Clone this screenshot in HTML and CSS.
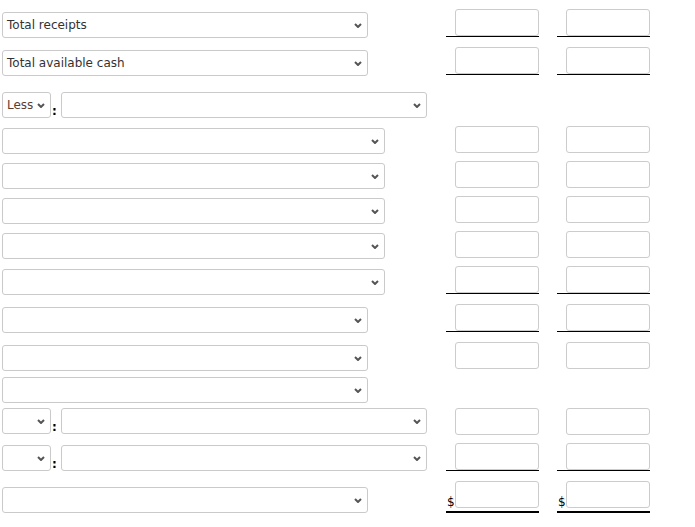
FILE: index.html
```html
<!DOCTYPE html>
<html lang="en">
<head>
<meta charset="utf-8">
<title>Cash budget</title>
<link rel="stylesheet" href="styles.css">
</head>
<body>
<div class="sheet">

  <div class="row row--tall">
    <div class="label pad-3"><div class="select w-366"><span>Total receipts</span><svg class="chev" width="8" height="5" viewBox="0 0 8 5"><polyline points="1,1 4,4 7,1"/></svg></div></div>
    <div class="amt ul"><input type="text"></div>
    <div class="amt ul"><input type="text"></div>
  </div>

  <div class="row row--open">
    <div class="label pad-3"><div class="select w-366"><span>Total available cash</span><svg class="chev" width="8" height="5" viewBox="0 0 8 5"><polyline points="1,1 4,4 7,1"/></svg></div></div>
    <div class="amt ul"><input type="text"></div>
    <div class="amt ul"><input type="text"></div>
  </div>

  <div class="row row--short">
    <div class="label pad-0">
      <div class="select w-49"><span class="less">Less</span><svg class="chev" width="8" height="5" viewBox="0 0 8 5"><polyline points="1,1 4,4 7,1"/></svg></div>
      <span class="colon">:</span>
      <div class="select w-366"><span></span><svg class="chev" width="8" height="5" viewBox="0 0 8 5"><polyline points="1,1 4,4 7,1"/></svg></div>
    </div>
  </div>

  <div class="row">
    <div class="label pad-2"><div class="select w-383"><span></span><svg class="chev" width="8" height="5" viewBox="0 0 8 5"><polyline points="1,1 4,4 7,1"/></svg></div></div>
    <div class="amt"><input type="text"></div>
    <div class="amt"><input type="text"></div>
  </div>

  <div class="row">
    <div class="label pad-2"><div class="select w-383"><span></span><svg class="chev" width="8" height="5" viewBox="0 0 8 5"><polyline points="1,1 4,4 7,1"/></svg></div></div>
    <div class="amt"><input type="text"></div>
    <div class="amt"><input type="text"></div>
  </div>

  <div class="row">
    <div class="label pad-2"><div class="select w-383"><span></span><svg class="chev" width="8" height="5" viewBox="0 0 8 5"><polyline points="1,1 4,4 7,1"/></svg></div></div>
    <div class="amt"><input type="text"></div>
    <div class="amt"><input type="text"></div>
  </div>

  <div class="row">
    <div class="label pad-2"><div class="select w-383"><span></span><svg class="chev" width="8" height="5" viewBox="0 0 8 5"><polyline points="1,1 4,4 7,1"/></svg></div></div>
    <div class="amt"><input type="text"></div>
    <div class="amt"><input type="text"></div>
  </div>

  <div class="row row--tall">
    <div class="label pad-3"><div class="select w-383"><span></span><svg class="chev" width="8" height="5" viewBox="0 0 8 5"><polyline points="1,1 4,4 7,1"/></svg></div></div>
    <div class="amt ul"><input type="text"></div>
    <div class="amt ul"><input type="text"></div>
  </div>

  <div class="row row--tall">
    <div class="label pad-3"><div class="select w-366"><span></span><svg class="chev" width="8" height="5" viewBox="0 0 8 5"><polyline points="1,1 4,4 7,1"/></svg></div></div>
    <div class="amt ul"><input type="text"></div>
    <div class="amt ul"><input type="text"></div>
  </div>

  <div class="row">
    <div class="label pad-3"><div class="select w-366"><span></span><svg class="chev" width="8" height="5" viewBox="0 0 8 5"><polyline points="1,1 4,4 7,1"/></svg></div></div>
    <div class="amt"><input type="text"></div>
    <div class="amt"><input type="text"></div>
  </div>

  <div class="row row--tight">
    <div class="label pad-0"><div class="select w-366"><span></span><svg class="chev" width="8" height="5" viewBox="0 0 8 5"><polyline points="1,1 4,4 7,1"/></svg></div></div>
  </div>

  <div class="row">
    <div class="label pad-0">
      <div class="select w-49"><span></span><svg class="chev" width="8" height="5" viewBox="0 0 8 5"><polyline points="1,1 4,4 7,1"/></svg></div>
      <span class="colon">:</span>
      <div class="select w-366"><span></span><svg class="chev" width="8" height="5" viewBox="0 0 8 5"><polyline points="1,1 4,4 7,1"/></svg></div>
    </div>
    <div class="amt"><input type="text"></div>
    <div class="amt"><input type="text"></div>
  </div>

  <div class="row row--tall">
    <div class="label pad-2">
      <div class="select w-49"><span></span><svg class="chev" width="8" height="5" viewBox="0 0 8 5"><polyline points="1,1 4,4 7,1"/></svg></div>
      <span class="colon">:</span>
      <div class="select w-366"><span></span><svg class="chev" width="8" height="5" viewBox="0 0 8 5"><polyline points="1,1 4,4 7,1"/></svg></div>
    </div>
    <div class="amt ul"><input type="text"></div>
    <div class="amt ul"><input type="text"></div>
  </div>

  <div class="row row--last">
    <div class="label pad-6"><div class="select w-366"><span></span><svg class="chev" width="8" height="5" viewBox="0 0 8 5"><polyline points="1,1 4,4 7,1"/></svg></div></div>
    <div class="amt total"><span class="dollar">$</span><input type="text"></div>
    <div class="amt total"><span class="dollar">$</span><input type="text"></div>
  </div>

</div>
</body>
</html>
```

FILE: styles.css
```css
* {
  box-sizing: border-box;
}

html,
body {
  margin: 0;
  background: #ffffff;
}

body {
  font-family: "DejaVu Sans", Verdana, sans-serif;
  font-size: 12px;
  color: #333333;
}

.sheet {
  width: 695px;
  padding: 9px 0 0 2px;
}

.row {
  display: flex;
  align-items: flex-start;
  height: 35px;
}

.row--tall {
  height: 38px;
}

.row--open {
  height: 45px;
}

.row--short {
  height: 34px;
}

.row--tight {
  height: 31px;
}

.row--last {
  height: auto;
}

.label {
  width: 444px;
  flex: none;
  display: flex;
  align-items: flex-end;
}

.pad-0 { padding-top: 0; }
.pad-2 { padding-top: 2px; }
.pad-3 { padding-top: 3px; }
.pad-6 { padding-top: 6px; }

.select {
  height: 26px;
  flex: none;
  display: flex;
  align-items: center;
  justify-content: space-between;
  padding: 0 5px 0 4px;
  border: 1px solid #cacaca;
  border-radius: 3px;
  background: #ffffff;
  white-space: nowrap;
}

.w-49 { width: 49px; }
.w-366 { width: 366px; }
.w-383 { width: 383px; }

.less {
  color: #5a3d33;
}

.chev {
  flex: none;
  margin-top: 1px;
}

.chev polyline {
  fill: none;
  stroke: #555555;
  stroke-width: 2;
}

.colon {
  width: 10px;
  flex: none;
  padding-left: 1px;
  font-weight: bold;
  color: #000000;
  line-height: 12px;
  margin-bottom: 1px;
}

.amt {
  width: 93px;
  flex: none;
  display: flex;
  justify-content: flex-end;
  align-items: flex-end;
}

.amt + .amt {
  margin-left: 18px;
}

.amt input {
  display: block;
  width: 84px;
  height: 27px;
  margin: 0;
  padding: 0 4px;
  border: 1px solid #cccccc;
  border-radius: 3px;
  background: #ffffff;
  font: inherit;
}

.amt.ul {
  border-bottom: 1px solid #000000;
}

.amt.total {
  justify-content: space-between;
  padding-bottom: 3px;
  border-bottom: 2px solid #000000;
}

.dollar {
  margin-left: 1px;
  color: #000000;
  line-height: 12px;
}
```
